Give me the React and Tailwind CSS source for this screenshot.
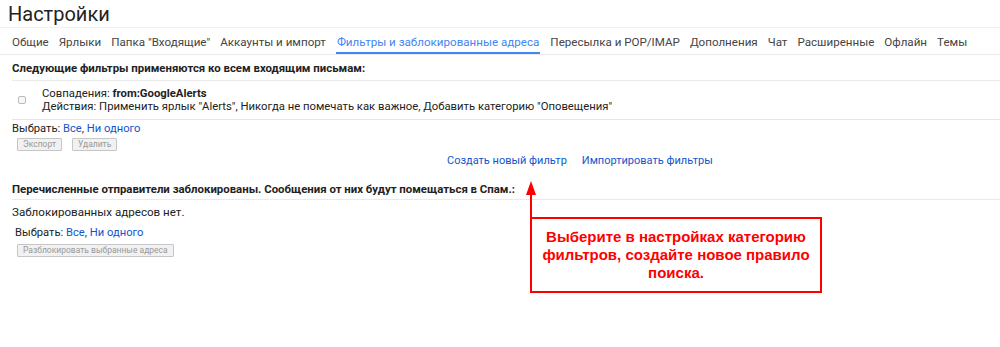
import React from 'react';

const tabs = [
  'Общие',
  'Ярлыки',
  'Папка "Входящие"',
  'Аккаунты и импорт',
  'Фильтры и заблокированные адреса',
  'Пересылка и POP/IMAP',
  'Дополнения',
  'Чат',
  'Расширенные',
  'Офлайн',
  'Темы',
];

const ACTIVE = 'Фильтры и заблокированные адреса';

const SelectRow = ({ className = '' }) => (
  <div className={`text-[11.2px] text-[#222] ${className}`}>
    Выбрать: <span className="text-[#15c]">Все</span>, <span className="text-[#15c]">Ни одного</span>
  </div>
);

const GrayButton = ({ children }) => (
  <button
    type="button"
    disabled
    className="h-[13px] px-[5px] border border-[#c6c6c6] bg-[#f1f1f1] text-[8.5px] leading-[11px] text-[#999] rounded-[1px] whitespace-nowrap"
  >
    {children}
  </button>
);

const App = () => {
  return (
    <div
      className="relative w-[1000px] h-[347px] bg-white overflow-hidden"
      style={{ fontFamily: 'Roboto, "Liberation Sans", Arial, sans-serif' }}
    >
      {/* header */}
      <div className="h-[28px] pl-[8px] pt-[2px] text-[20px] leading-[24px] text-[#222] border-b border-[#f1f1f1]">
        Настройки
      </div>

      {/* tabs */}
      <div className="flex pl-[12px] gap-[10px] border-b border-[#eaeaea] h-[27px] text-[11.6px] leading-[16px] text-[#444] whitespace-nowrap">
        {tabs.map((t) => (
          <div
            key={t}
            className={
              t === ACTIVE
                ? 'shrink-0 pt-[6px] text-[#4285f4] border-b-2 border-[#4285f4] px-[1px]'
                : 'shrink-0 pt-[6px]'
            }
          >
            {t}
          </div>
        ))}
      </div>

      <div className="pl-[12px]">
        <div className="pt-[5px] h-[26px] text-[11.4px] font-bold text-[#222] border-b border-[#eaeaea]">
          Следующие фильтры применяются ко всем входящим письмам:
        </div>

        <div className="flex items-center h-[39px] border-b border-[#e5e5e5]">
          <div className="w-[30px] shrink-0 pl-[6px]">
            <div className="w-[8px] h-[8px] border border-[#bbb] rounded-[2px] bg-[#f6f6f6]" />
          </div>
          <div className="text-[11.3px] leading-[13px] text-[#222]">
            <div>
              Совпадения: <span className="font-bold">from:GoogleAlerts</span>
            </div>
            <div>
              Действия: Применить ярлык "Alerts", Никогда не помечать как важное, Добавить категорию "Оповещения"
            </div>
          </div>
        </div>

        <SelectRow className="pt-[1px] leading-[16px]" />
        <div className="flex gap-[10px] pl-[5px] pt-[1px]">
          <GrayButton>Экспорт</GrayButton>
          <GrayButton>Удалить</GrayButton>
        </div>

        <div className="flex gap-[15px] pt-[2px] text-[11px] text-[#15c] pl-[435px]">
          <span>Создать новый фильтр</span>
          <span>Импортировать фильтры</span>
        </div>

        <div className="pt-[11px] h-[30px] text-[11.4px] font-bold text-[#222] border-b border-[#eaeaea]">
          Перечисленные отправители заблокированы. Сообщения от них будут помещаться в Спам.:
        </div>

        <div className="pt-[4px] text-[11.6px] text-[#222]">Заблокированных адресов нет.</div>
        <SelectRow className="pl-[3px] pt-[5px] leading-[14px]" />
        <div className="flex pl-[5px] pt-[4px]">
          <GrayButton>Разблокировать выбранные адреса</GrayButton>
        </div>
      </div>

      {/* annotation overlay */}
      <svg width="14" height="112" className="absolute left-[524px] top-[181px]" viewBox="0 0 14 112">
        <path d="M7 0 L12 14 L2 14 Z" fill="#ff0000" />
        <rect x="6" y="10" width="2" height="102" fill="#ff0000" />
      </svg>
      <div
        className="absolute left-[530px] top-[217px] w-[292px] h-[76px] border-2 border-[#ff0000] flex flex-col items-center justify-center text-center text-[15px] leading-[18px] font-bold text-[#ff0000]"
        style={{ fontFamily: 'Arial, "Liberation Sans", sans-serif' }}
      >
        <div>Выберите в настройках категорию</div>
        <div>фильтров, создайте новое правило</div>
        <div>поиска.</div>
      </div>
    </div>
  );
};

export default App;
